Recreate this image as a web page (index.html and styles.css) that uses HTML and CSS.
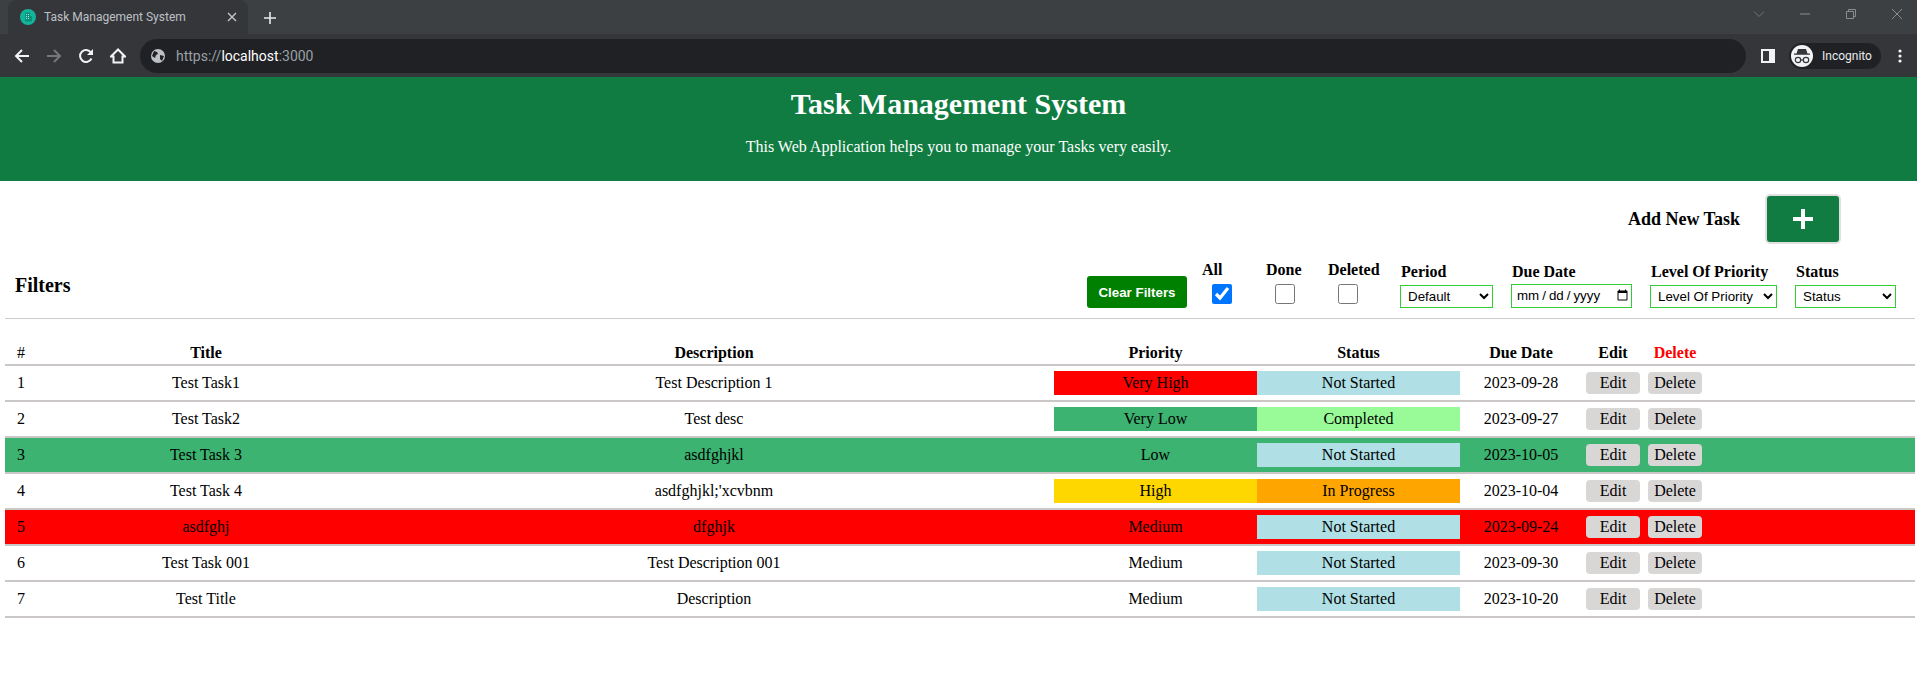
FILE: index.html
```html
<!DOCTYPE html>
<html lang="en">
<head>
<meta charset="utf-8">
<title>Task Management System</title>
<link rel="stylesheet" href="styles.css">
</head>
<body>
<div class="chrome">
  <div class="tabstrip">
    <div class="tab">
      <svg class="favicon" width="16" height="16" viewBox="0 0 16 16"><circle cx="8" cy="8" r="8" fill="#12b59b"/><path d="M5 3.500h5v9H5zM10 7h2v5.500h-2z" fill="#0b8f79"/><path d="M6 5h1v1H6zM8 5h1v1H8zM6 7h1v1H6zM8 7h1v1H8zM6 9h1v1H6zM8 9h1v1H8z" fill="#9fe8da"/></svg>
      <span class="tab-title">Task Management System</span>
      <svg class="tab-close" width="10" height="10" viewBox="0 0 10 10"><path d="M1 1l8 8M9 1l-8 8" stroke="#c4c7c5" stroke-width="1.400"/></svg>
    </div>
    <svg class="newtab" width="12" height="12" viewBox="0 0 12 12"><path d="M6 0v12M0 6h12" stroke="#e8eaed" stroke-width="1.600"/></svg>
    <div class="winctl">
      <svg width="12" height="12" viewBox="0 0 12 12"><path d="M1 3.500l5 5 5-5" fill="none" stroke="#70757a" stroke-width="1"/></svg>
      <svg width="12" height="12" viewBox="0 0 12 12"><path d="M1 6h10" stroke="#8a8d90" stroke-width="1"/></svg>
      <svg width="12" height="12" viewBox="0 0 12 12"><path d="M1.500 3.500h7v7h-7zM3.500 3.500V1.500h7v7H8.500" fill="none" stroke="#8a8d90" stroke-width="1"/></svg>
      <svg width="12" height="12" viewBox="0 0 12 12"><path d="M1 1l10 10M11 1L1 11" stroke="#8a8d90" stroke-width="1"/></svg>
    </div>
  </div>
  <div class="toolbar">
    <svg class="nav" width="16" height="16" viewBox="0 0 16 16"><path d="M15 8H2M8 2L2 8l6 6" fill="none" stroke="#f1f3f4" stroke-width="2"/></svg>
    <svg class="nav" width="16" height="16" viewBox="0 0 16 16"><path d="M1 8h13M8 2l6 6-6 6" fill="none" stroke="#75787b" stroke-width="2"/></svg>
    <svg class="nav" width="16" height="16" viewBox="0 0 16 16"><path d="M13.500 10.500A6 6 0 1 1 13 4.500" fill="none" stroke="#f1f3f4" stroke-width="2"/><path d="M15 1v6H9z" fill="#f1f3f4"/></svg>
    <svg class="nav home" width="16" height="16" viewBox="0 0 16 16"><path d="M8 1.500L1 8.500h2.500v6h9v-6H15z" fill="none" stroke="#f1f3f4" stroke-width="2"/></svg>
    <div class="omnibox">
      <svg width="14" height="14" viewBox="0 0 14 14"><circle cx="7" cy="7" r="7" fill="#bdc1c6"/><path d="M3 2l3 1 1 2-2 1-1 3-3-2zM9 6l4 1-2 5-2-2z" fill="#202124"/></svg>
      <span class="url"><span class="url-dim">https://</span><span class="url-host">localhost</span><span class="url-dim">:3000</span></span>
    </div>
    <svg class="side" width="14" height="14" viewBox="0 0 14 14"><path d="M0 0h14v14H0z" fill="#f1f3f4"/><path d="M2 2h6v10H2z" fill="#35363a"/></svg>
    <div class="incognito">
      <span class="incognito-face"><svg width="18" height="16" viewBox="0 0 18 16"><path d="M5 1h8l1.500 4.500H17v1.200H1V5.500h2.500z" fill="#35363a"/><circle cx="5" cy="12" r="2.700" fill="none" stroke="#35363a" stroke-width="1.200"/><circle cx="13" cy="12" r="2.700" fill="none" stroke="#35363a" stroke-width="1.200"/><path d="M7.700 12h2.600" stroke="#35363a" stroke-width="1.200"/></svg></span>
      <span>Incognito</span>
    </div>
    <svg class="menu" width="4" height="14" viewBox="0 0 4 14"><circle cx="2" cy="2" r="1.600" fill="#f1f3f4"/><circle cx="2" cy="7" r="1.600" fill="#f1f3f4"/><circle cx="2" cy="12" r="1.600" fill="#f1f3f4"/></svg>
  </div>
</div>

<header class="banner">
  <h1>Task Management System</h1>
  <p>This Web Application helps you to manage your Tasks very easily.</p>
</header>

<main class="content">
  <div class="add-row">
    <span class="add-label">Add New Task</span>
    <button class="add-btn" type="button"><svg width="20" height="20" viewBox="0 0 20 20"><path d="M10 0v20M0 10h20" stroke="#fff" stroke-width="4"/></svg></button>
  </div>

  <div class="filters">
    <span class="filters-title">Filters</span>
    <div class="filter-controls">
      <button class="clear-btn" type="button">Clear Filters</button>
      <label class="check check-all"><b>All</b><input type="checkbox" checked></label>
      <label class="check check-done"><b>Done</b><input type="checkbox"></label>
      <label class="check check-deleted"><b>Deleted</b><input type="checkbox"></label>
      <label class="field field-period"><b>Period</b><select><option>Default</option></select></label>
      <label class="field field-date"><b>Due Date</b><input type="date"></label>
      <label class="field field-level"><b>Level Of Priority</b><select><option>Level Of Priority</option></select></label>
      <label class="field field-status"><b>Status</b><select><option>Status</option></select></label>
    </div>
  </div>

  <table class="tasks">
    <colgroup>
      <col class="c-num"><col class="c-title"><col class="c-desc"><col class="c-pri"><col class="c-stat"><col class="c-due"><col class="c-edit"><col class="c-del"><col>
    </colgroup>
    <thead>
      <tr><th class="num">#</th><th>Title</th><th>Description</th><th>Priority</th><th>Status</th><th>Due Date</th><th>Edit</th><th class="del-head">Delete</th><th></th></tr>
    </thead>
    <tbody>
      <tr><td class="num">1</td><td>Test Task1</td><td>Test Description 1</td><td><div class="tag very-high">Very High</div></td><td><div class="tag not-started">Not Started</div></td><td>2023-09-28</td><td><button class="act edit" type="button">Edit</button></td><td><button class="act" type="button">Delete</button></td><td></td></tr>
      <tr><td class="num">2</td><td>Test Task2</td><td>Test desc</td><td><div class="tag very-low">Very Low</div></td><td><div class="tag completed">Completed</div></td><td>2023-09-27</td><td><button class="act edit" type="button">Edit</button></td><td><button class="act" type="button">Delete</button></td><td></td></tr>
      <tr class="row-green"><td class="num">3</td><td>Test Task 3</td><td>asdfghjkl</td><td><div class="tag">Low</div></td><td><div class="tag not-started">Not Started</div></td><td>2023-10-05</td><td><button class="act edit" type="button">Edit</button></td><td><button class="act" type="button">Delete</button></td><td></td></tr>
      <tr><td class="num">4</td><td>Test Task 4</td><td>asdfghjkl;'xcvbnm</td><td><div class="tag high">High</div></td><td><div class="tag progress">In Progress</div></td><td>2023-10-04</td><td><button class="act edit" type="button">Edit</button></td><td><button class="act" type="button">Delete</button></td><td></td></tr>
      <tr class="row-red"><td class="num">5</td><td>asdfghj</td><td>dfghjk</td><td><div class="tag">Medium</div></td><td><div class="tag not-started">Not Started</div></td><td>2023-09-24</td><td><button class="act edit" type="button">Edit</button></td><td><button class="act" type="button">Delete</button></td><td></td></tr>
      <tr><td class="num">6</td><td>Test Task 001</td><td>Test Description 001</td><td><div class="tag">Medium</div></td><td><div class="tag not-started">Not Started</div></td><td>2023-09-30</td><td><button class="act edit" type="button">Edit</button></td><td><button class="act" type="button">Delete</button></td><td></td></tr>
      <tr><td class="num">7</td><td>Test Title</td><td>Description</td><td><div class="tag">Medium</div></td><td><div class="tag not-started">Not Started</div></td><td>2023-10-20</td><td><button class="act edit" type="button">Edit</button></td><td><button class="act" type="button">Delete</button></td><td></td></tr>
    </tbody>
  </table>
</main>
</body>
</html>
```
FILE: styles.css
```css
* { box-sizing: border-box; }
html, body { margin: 0; height: 100%; overflow: hidden; background: #fff; }
body { font-family: "Liberation Serif", "Times New Roman", serif; font-size: 16px; color: #000; }

/* browser chrome */
.chrome { height: 77px; background: #35363a; font-family: Roboto, "Noto Sans", sans-serif; }
.tabstrip { height: 34px; background: #3c4043; display: flex; align-items: center; padding-left: 8px; }
.tab { width: 240px; height: 34px; background: #35363a; border-radius: 8px 8px 0 0; display: flex; align-items: center; padding: 0 11px 0 12px; margin-right: 16px; }
.favicon { flex: none; }
.tab-title { flex: 1; margin-left: 8px; font-size: 12px; color: #bdc1c6; white-space: nowrap; }
.newtab { flex: none; margin-top: 2px; }
.winctl { margin-left: auto; display: flex; gap: 34px; padding-right: 14px; margin-top: -6px; }
.toolbar { height: 43px; display: flex; align-items: center; padding-left: 14px; }
.nav { flex: none; margin-right: 16px; }
.nav.home { margin-right: 14px; }
.omnibox { width: 1606px; height: 34px; background: #202124; border-radius: 17px; display: flex; align-items: center; padding-left: 11px; flex: none; }
.url { margin-left: 11px; font-size: 14px; }
.url-dim { color: #9aa0a6; }
.url-host { color: #fff; }
.side { flex: none; margin-left: 15px; }
.incognito { flex: none; margin-left: 14px; width: 92px; height: 26px; background: #202124; border-radius: 13px; display: flex; align-items: center; font-size: 12px; color: #e8eaed; padding-left: 2px; gap: 9px; }
.incognito-face { width: 22px; height: 22px; background: #f1f3f4; border-radius: 50%; display: flex; align-items: center; justify-content: center; }
.menu { flex: none; margin-left: 17px; }

/* banner */
.banner { height: 104px; background: #107c41; color: #fff; text-align: center; padding-top: 10px; }
.banner h1 { margin: 0; font-size: 30px; line-height: 34px; font-weight: bold; }
.banner p { margin: 17px 0 0; font-size: 16px; line-height: 18px; }

/* content */
.content { padding: 0 2px 0 5px; }
.add-row { display: flex; justify-content: flex-end; align-items: center; height: 62px; padding: 14px 74px 0 0; }
.add-label { font-weight: bold; font-size: 18px; margin-right: 25px; }
.add-btn { width: 76px; height: 50px; background: #107c41; border: 2px solid #e0e0e0; border-radius: 5px; display: flex; align-items: center; justify-content: center; padding: 0; }

.filters { height: 76px; border-bottom: 1px solid #cccccc; display: flex; justify-content: space-between; align-items: flex-start; }
.filters-title { font-weight: bold; font-size: 20px; line-height: 22px; margin: 31px 0 0 10px; }
.filter-controls { display: flex; align-items: flex-start; padding-right: 19px; }
.clear-btn { width: 100px; height: 32px; margin-top: 33px; background: #008000; color: #fff; border: 0; border-radius: 3px; font: bold 13.33px "Liberation Sans", Arial, sans-serif; padding: 0; }
.check { display: flex; flex-direction: column; align-items: flex-start; margin-top: 18px; line-height: 18px; }
.check b { white-space: nowrap; }
.check input { width: 20px; height: 20px; margin: 5px 0 0; accent-color: #0075ff; }
.check-all { margin-left: 15px; width: 64px; }
.check-all input { margin-left: 10px; }
.check-done { width: 62px; }
.check-done input { margin-left: 9px; }
.check-deleted { width: 72px; }
.check-deleted input { margin-left: 10px; }
.field { display: flex; flex-direction: column; align-items: flex-start; margin-top: 20px; }
.field b { line-height: 18px; margin: 0 0 4px 1px; white-space: nowrap; }
.field select, .field input { height: 23px; border: 1px solid #32cd32; background: #fff; border-radius: 0; font-family: "Liberation Sans", Arial, sans-serif; font-size: 13.33px; color: #000; padding-left: 3px; }
.field input { height: 24px; margin-top: -1px; }
.field input::-webkit-datetime-edit-text { padding: 0 2px; }
.field-date input { padding-left: 4px; }
.field-period select { width: 93px; }
.field-date { margin-left: 18px; }
.field-date input { width: 121px; }
.field-level { margin-left: 18px; }
.field-level select { width: 127px; }
.field-status { margin-left: 18px; }
.field-status select { width: 101px; }

.tasks { width: 1910px; table-layout: fixed; border-collapse: collapse; margin-top: 22px; }
.c-num { width: 33px; } .c-title { width: 336px; } .c-desc { width: 680px; } .c-pri, .c-stat { width: 203px; } .c-due { width: 122px; } .c-edit, .c-del { width: 62px; }
.tasks th, .tasks td { padding: 0; text-align: center; font-size: 16px; }
.tasks th { height: 24px; border-bottom: 2px solid #cbc7c7; }
.tasks td { height: 36px; border-bottom: 2px solid #cbc7c7; }
.tasks .num { text-align: left; padding-left: 12px; font-weight: normal; }
.del-head { color: #f00; }
.tag { height: 24px; line-height: 24px; }
.very-high { background: #f00; }
.very-low { background: #3cb371; }
.high { background: #ffd700; }
.not-started { background: #b0e0e6; }
.completed { background: #98fb98; }
.progress { background: #ffa500; }
.row-green { background: #3cb371; }
.row-red { background: #f00; }
.act { width: 54px; height: 22px; padding: 0; border: 0; border-radius: 4px; background: #d9d6d6; font: 16px "Liberation Serif", "Times New Roman", serif; color: #000; display: block; margin: 0 auto; }
```
